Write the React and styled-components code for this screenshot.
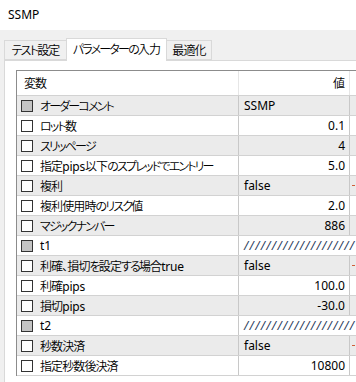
import React from "react";
import styled, { createGlobalStyle } from "styled-components";

const Global = createGlobalStyle`
  html, body { margin: 0; padding: 0; }
  body {
    background: #f0f0f0;
    font-family: "Noto Sans", "Noto Sans CJK JP", sans-serif;
    font-size: 12px;
    color: #000;
  }
`;

const Window = styled.div`
  width: 356px;
  height: 382px;
  overflow: hidden;
  display: flex;
  flex-direction: column;
  background: #f0f0f0;
  font-feature-settings: "palt";
`;

const TitleBar = styled.div`
  height: 30px;
  flex: none;
  background: #fff;
  display: flex;
  align-items: center;
  padding-left: 8px;
  font-size: 12px;
  line-height: 1;
`;

const TabBar = styled.div`
  display: flex;
  align-items: flex-end;
  height: 22px;
  margin-top: 8px;
  padding-left: 4px;
  flex: none;
  position: relative;
  z-index: 1;
`;

const Tab = styled.div`
  box-sizing: border-box;
  width: ${(p) => p.$w}px;
  height: ${(p) => (p.$active ? 23 : 20)}px;
  margin-left: ${(p) => (p.$first ? 0 : -1)}px;
  margin-bottom: ${(p) => (p.$active ? -1 : 0)}px;
  border: 1px solid #d9d9d9;
  border-bottom: ${(p) => (p.$active ? "none" : "1px solid #d9d9d9")};
  background: ${(p) => (p.$active ? "#fff" : "#f0f0f0")};
  display: flex;
  align-items: center;
  justify-content: center;
  padding-bottom: ${(p) => (p.$active ? 2 : 0)}px;
  white-space: nowrap;
  overflow: hidden;
`;

const Panel = styled.div`
  flex: 1;
  margin-left: 4px;
  border-top: 1px solid #d9d9d9;
  border-left: 1px solid #d9d9d9;
  background: #fff;
  padding: 9px 0 0 11px;
  overflow: hidden;
`;

const Table = styled.div`
  border-left: 1px solid #8c8c8c;
  border-top: 1px solid #8c8c8c;
  width: 400px;
  background: #fff;
`;

const HeaderRow = styled.div`
  display: grid;
  grid-template-columns: 222px 111px 1fr;
  height: 25px;
  box-sizing: border-box;
  border-bottom: 1px solid #d2d2d2;
`;

const HeaderCell = styled.div`
  display: flex;
  align-items: center;
  justify-content: ${(p) => (p.$right ? "flex-end" : "flex-start")};
  padding: ${(p) => (p.$right ? "0 5px 0 0" : "0 0 0 7px")};
  border-right: ${(p) => (p.$last ? "none" : "1px solid #e6e6e6")};
  box-sizing: border-box;
`;

const Row = styled.div`
  display: grid;
  grid-template-columns: 222px 111px 1fr;
  height: 20px;
  box-sizing: border-box;
  border-bottom: 1px solid #d2d2d2;
  background: ${(p) => (p.$alt ? "#ebebeb" : "#fff")};
`;

const NameCell = styled.div`
  display: flex;
  align-items: center;
  gap: 7px;
  padding-left: 4px;
  border-right: 1px solid #c8c8c8;
  box-sizing: border-box;
  white-space: nowrap;
  overflow: hidden;
`;

const Seg = styled.span`
  font-size: 12px;
  font-weight: ${(p) => (p.$kind === "latin" ? 400 : 350)};
  letter-spacing: ${(p) =>
    p.$kind === "kana" ? "-1.8px" : p.$kind === "cjk" ? "-0.9px" : "-0.2px"};
`;

const Check = styled.span`
  flex: none;
  width: 12px;
  height: 12px;
  box-sizing: border-box;
  border: 1px solid #333;
  background: ${(p) => (p.$disabled ? "#c4c4c4" : "#fff")};
`;

const ValueCell = styled.div`
  display: flex;
  align-items: center;
  justify-content: ${(p) => (p.$right ? "flex-end" : "flex-start")};
  padding: ${(p) => (p.$right ? "0 4px 0 0" : "0 0 0 5px")};
  border-right: ${(p) => (p.$overflow ? "none" : "1px solid #c8c8c8")};
  box-sizing: border-box;
  white-space: nowrap;
  overflow: ${(p) => (p.$overflow ? "visible" : "hidden")};
  font-size: 12px;
  font-style: ${(p) => (p.$overflow ? "italic" : "normal")};
  letter-spacing: ${(p) => (p.$overflow ? "1.3px" : "0")};
  color: ${(p) => (p.$overflow ? "#2a3a5a" : "#000")};
`;

const ExtraCell = styled.div`
  display: flex;
  align-items: center;
  padding-left: 2px;
`;

const Tick = styled.span`
  width: 3px;
  height: 1px;
  background: #d0603a;
`;

const rows = [
  { name: "オーダーコメント", value: "SSMP", disabled: true },
  { name: "ロット数", value: "0.1", right: true },
  { name: "スリッページ", value: "4", right: true },
  { name: "指定pips以下のスプレッドでエントリー", value: "5.0", right: true },
  { name: "複利", value: "false", bool: true },
  { name: "複利使用時のリスク値", value: "2.0", right: true },
  { name: "マジックナンバー", value: "886", right: true },
  { name: "t1", value: "////////////////////", disabled: true, sep: true },
  { name: "利確、損切を設定する場合true", value: "false", bool: true },
  { name: "利確pips", value: "100.0", right: true },
  { name: "損切pips", value: "-30.0", right: true },
  { name: "t2", value: "////////////////////", disabled: true, sep: true },
  { name: "秒数決済", value: "false", bool: true },
  { name: "指定秒数後決済", value: "10800", right: true },
];

const segRe = /([\u3040-\u30ff]+|[\u3000-\u303f\u4e00-\u9fff\uff00-\uffef]+|[^\u3000-\u30ff\u4e00-\u9fff\uff00-\uffef]+)/g;

function Label({ text }) {
  const parts = text.match(segRe) || [];
  return (
    <span>
      {parts.map((p, i) => {
        const kind = /[\u3040-\u30ff]/.test(p)
          ? "kana"
          : /[\u3000-\u303f\u4e00-\u9fff\uff00-\uffef]/.test(p)
          ? "cjk"
          : "latin";
        return (
          <Seg key={i} $kind={kind}>
            {p}
          </Seg>
        );
      })}
    </span>
  );
}

export default function App() {
  return (
    <>
      <Global />
      <Window>
        <TitleBar>SSMP</TitleBar>
        <TabBar>
          <Tab $first $w={63}>
            <Label text="テスト設定" />
          </Tab>
          <Tab $active $w={101}>
            <Label text="パラメーターの入力" />
          </Tab>
          <Tab $w={46}>
            <Label text="最適化" />
          </Tab>
        </TabBar>
        <Panel>
          <Table>
            <HeaderRow>
              <HeaderCell>
                <Label text="変数" />
              </HeaderCell>
              <HeaderCell $right>
                <Label text="値" />
              </HeaderCell>
              <HeaderCell $last />
            </HeaderRow>
            {rows.map((r, i) => (
              <Row key={i} $alt={i % 2 === 0}>
                <NameCell>
                  <Check $disabled={r.disabled} />
                  <Label text={r.name} />
                </NameCell>
                <ValueCell $right={r.right} $overflow={r.sep}>
                  {r.value}
                </ValueCell>
                <ExtraCell>{r.bool && <Tick />}</ExtraCell>
              </Row>
            ))}
          </Table>
        </Panel>
      </Window>
    </>
  );
}
